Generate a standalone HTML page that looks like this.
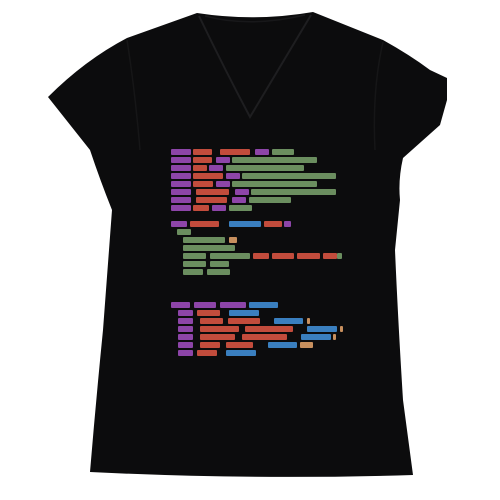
<!DOCTYPE html>
<html><head><style>
html,body{margin:0;padding:0;background:#fff;}
#w{position:relative;width:500px;height:500px;overflow:hidden;background:#fff;}
svg{position:absolute;left:0;top:0;}
.b{position:absolute;height:6px;border-radius:1px;}
.p{background:#8d45a8}.r{background:#c24c3c}.g{background:#6b8e5f}.u{background:#3a7fbf}.o{background:#c8905e}
</style></head><body><div id="w">
<svg width="500" height="500" viewBox="0 0 500 500">
<path d="M197,13 Q255,22 313,12 L383,40 Q410,55 430,70 L447,78 L447,100 L440,125 L403,158 Q398,180 400,200 L395,250 Q398,320 403,400 L413,475 Q250,480 90,472 Q96,400 103,330 L112,210 Q100,180 90,150 L48,97 Q85,60 127,38 Z" fill="#0c0c0d"/>
<path d="M199,16 Q225,70 250,117 Q278,70 311,15" fill="none" stroke="#1e1e20" stroke-width="2"/>
<path d="M205,16 Q250,28 305,15" fill="none" stroke="#18181a" stroke-width="1.5"/>
<path d="M127,40 Q135,90 140,150" fill="none" stroke="#161617" stroke-width="1.5"/>
<path d="M383,42 Q372,90 375,150" fill="none" stroke="#161617" stroke-width="1.5"/>
</svg>
<!-- block 1 -->
<div class="b p" style="left:171px;top:149px;width:20px"></div><div class="b r" style="left:193px;top:149px;width:19px"></div><div class="b r" style="left:220px;top:149px;width:30px"></div><div class="b p" style="left:255px;top:149px;width:14px"></div><div class="b g" style="left:272px;top:149px;width:22px"></div>
<div class="b p" style="left:171px;top:157px;width:20px"></div><div class="b r" style="left:193px;top:157px;width:19px"></div><div class="b p" style="left:216px;top:157px;width:14px"></div><div class="b g" style="left:232px;top:157px;width:85px"></div>
<div class="b p" style="left:171px;top:165px;width:20px"></div><div class="b r" style="left:193px;top:165px;width:14px"></div><div class="b p" style="left:209px;top:165px;width:14px"></div><div class="b g" style="left:226px;top:165px;width:78px"></div>
<div class="b p" style="left:171px;top:173px;width:20px"></div><div class="b r" style="left:193px;top:173px;width:30px"></div><div class="b p" style="left:226px;top:173px;width:14px"></div><div class="b g" style="left:242px;top:173px;width:94px"></div>
<div class="b p" style="left:171px;top:181px;width:20px"></div><div class="b r" style="left:193px;top:181px;width:20px"></div><div class="b p" style="left:216px;top:181px;width:14px"></div><div class="b g" style="left:232px;top:181px;width:85px"></div>
<div class="b p" style="left:171px;top:189px;width:20px"></div><div class="b r" style="left:196px;top:189px;width:33px"></div><div class="b p" style="left:235px;top:189px;width:14px"></div><div class="b g" style="left:251px;top:189px;width:85px"></div>
<div class="b p" style="left:171px;top:197px;width:20px"></div><div class="b r" style="left:196px;top:197px;width:31px"></div><div class="b p" style="left:232px;top:197px;width:14px"></div><div class="b g" style="left:249px;top:197px;width:42px"></div>
<div class="b p" style="left:171px;top:205px;width:20px"></div><div class="b r" style="left:193px;top:205px;width:16px"></div><div class="b p" style="left:212px;top:205px;width:14px"></div><div class="b g" style="left:229px;top:205px;width:23px"></div>
<!-- block 2 -->
<div class="b p" style="left:171px;top:221px;width:16px"></div><div class="b r" style="left:190px;top:221px;width:29px"></div><div class="b u" style="left:229px;top:221px;width:32px"></div><div class="b r" style="left:264px;top:221px;width:18px"></div><div class="b p" style="left:284px;top:221px;width:7px"></div>
<div class="b g" style="left:177px;top:229px;width:14px"></div>
<div class="b g" style="left:183px;top:237px;width:42px"></div><div class="b o" style="left:229px;top:237px;width:8px"></div>
<div class="b g" style="left:183px;top:245px;width:52px"></div>
<div class="b g" style="left:183px;top:253px;width:23px"></div><div class="b g" style="left:210px;top:253px;width:40px"></div><div class="b r" style="left:253px;top:253px;width:16px"></div><div class="b r" style="left:272px;top:253px;width:22px"></div><div class="b r" style="left:297px;top:253px;width:23px"></div><div class="b r" style="left:323px;top:253px;width:14px"></div><div class="b g" style="left:337px;top:253px;width:5px"></div>
<div class="b g" style="left:183px;top:261px;width:23px"></div><div class="b g" style="left:210px;top:261px;width:19px"></div>
<div class="b g" style="left:183px;top:269px;width:20px"></div><div class="b g" style="left:207px;top:269px;width:23px"></div>
<!-- block 3 -->
<div class="b p" style="left:171px;top:302px;width:19px"></div><div class="b p" style="left:194px;top:302px;width:22px"></div><div class="b p" style="left:220px;top:302px;width:26px"></div><div class="b u" style="left:249px;top:302px;width:29px"></div>
<div class="b p" style="left:178px;top:310px;width:15px"></div><div class="b r" style="left:197px;top:310px;width:23px"></div><div class="b u" style="left:229px;top:310px;width:30px"></div>
<div class="b p" style="left:178px;top:318px;width:15px"></div><div class="b r" style="left:200px;top:318px;width:23px"></div><div class="b r" style="left:228px;top:318px;width:32px"></div><div class="b u" style="left:274px;top:318px;width:29px"></div><div class="b o" style="left:307px;top:318px;width:3px"></div>
<div class="b p" style="left:178px;top:326px;width:15px"></div><div class="b r" style="left:200px;top:326px;width:39px"></div><div class="b r" style="left:245px;top:326px;width:48px"></div><div class="b u" style="left:307px;top:326px;width:30px"></div><div class="b o" style="left:340px;top:326px;width:3px"></div>
<div class="b p" style="left:178px;top:334px;width:15px"></div><div class="b r" style="left:200px;top:334px;width:35px"></div><div class="b r" style="left:242px;top:334px;width:45px"></div><div class="b u" style="left:301px;top:334px;width:30px"></div><div class="b o" style="left:333px;top:334px;width:3px"></div>
<div class="b p" style="left:178px;top:342px;width:15px"></div><div class="b r" style="left:200px;top:342px;width:20px"></div><div class="b r" style="left:226px;top:342px;width:27px"></div><div class="b u" style="left:268px;top:342px;width:29px"></div><div class="b o" style="left:300px;top:342px;width:13px"></div>
<div class="b p" style="left:178px;top:350px;width:15px"></div><div class="b r" style="left:197px;top:350px;width:20px"></div><div class="b u" style="left:226px;top:350px;width:30px"></div>
</div></body></html>
